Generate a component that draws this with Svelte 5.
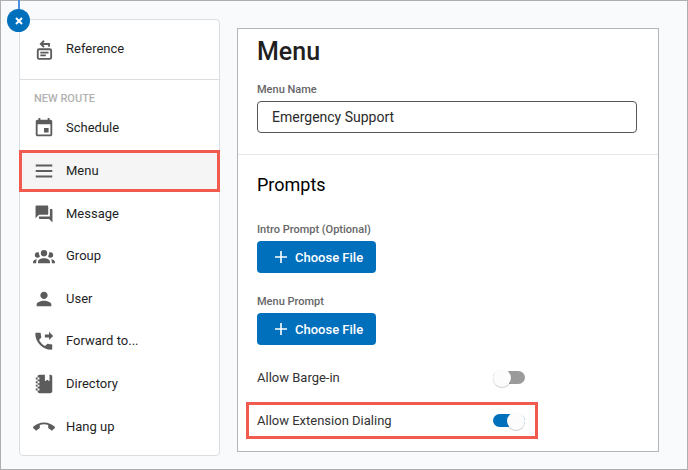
<script>
  const icons = {
    schedule:
      'M17 12h-5v5h5v-5zM16 1v2H8V1H6v2H5c-1.11 0-1.99.9-1.99 2L3 19c0 1.1.89 2 2 2h14c1.1 0 2-.9 2-2V5c0-1.1-.9-2-2-2h-1V1h-2zm3 18H5V8h14v11z',
    menu: 'M3 19h18v-2H3v2zm0-6h18v-2H3v2zm0-8v2h18V5H3z',
    message:
      'M21 6h-2v9H6v2c0 .55.45 1 1 1h11l4 4V7c0-.55-.45-1-1-1zm-4 6V3c0-.55-.45-1-1-1H3c-.55 0-1 .45-1 1v14l4-4h10c.55 0 1-.45 1-1z',
    group:
      'M12 5.5a3.5 3.5 0 1 1 0 7 3.5 3.5 0 0 1 0-7M5 8c.56 0 1.08.15 1.53.42-.15 1.43.27 2.85 1.13 3.96C7.16 13.34 6.16 14 5 14a3 3 0 0 1 0-6m14 0a3 3 0 0 1 0 6c-1.16 0-2.16-.66-2.66-1.62.86-1.11 1.28-2.53 1.13-3.96C17.92 8.15 18.44 8 19 8M5.5 18.25c0-2.07 2.91-3.75 6.5-3.75s6.5 1.68 6.5 3.75V20h-13v-1.75M0 20v-1.5c0-1.39 1.89-2.56 4.45-2.9-.59.68-.95 1.62-.95 2.65V20H0m24 0h-3.5v-1.75c0-1.03-.36-1.97-.95-2.65 2.56.34 4.45 1.51 4.45 2.9V20z',
    user: 'M12 12c2.21 0 4-1.79 4-4s-1.79-4-4-4-4 1.79-4 4 1.79 4 4 4zm0 2c-2.67 0-8 1.34-8 4v2h16v-2c0-2.66-5.33-4-8-4z',
    forward:
      'M17.500 11l4.500-4.500L17.500 2v2.800H13v3.400h4.500zM20 15.500c-1.250 0-2.450-.2-3.570-.57-.35-.11-.74-.03-1.020.24l-2.200 2.200c-2.830-1.440-5.150-3.750-6.590-6.590l2.200-2.210c.28-.26.36-.65.25-1C8.700 6.450 8.500 5.250 8.500 4c0-.55-.45-1-1-1H3.500c-.55 0-1 .45-1 1 0 9.390 8.110 17.500 17.500 17.500.55 0 1-.45 1-1v-4c0-.55-.45-1-1-1z',
    directory:
      'M3 7V5h2V4c0-1.100.9-2 2-2h6v7l2.500-1.700L18 9V2h1c1.100 0 2 .9 2 2v16c0 1.100-.9 2-2 2H7c-1.100 0-2-.9-2-2v-1H3v-2h2v-2.300H3v-2h2v-1.600H3v-2h2V7H3m4 4.100v-2H5v2h2m0 3.600v-2H5v2h2M7 7V5H5v2h2m0 12v-2H5v2h2z',
    hangup:
      'M12 9c-1.600 0-3.150.25-4.600.72v3.100c0 .39-.23.74-.56.9-.98.49-1.870 1.120-2.660 1.850-.18.18-.43.28-.7.28-.28 0-.53-.11-.71-.29L.29 13.080c-.18-.17-.29-.42-.29-.7 0-.28.11-.53.29-.71C3.340 8.780 7.460 7 12 7s8.660 1.780 11.710 4.670c.18.18.29.43.29.71 0 .28-.11.53-.29.71l-2.480 2.480c-.18.18-.43.29-.71.29-.27 0-.52-.11-.7-.28-.79-.74-1.690-1.360-2.670-1.850-.33-.16-.56-.5-.56-.9v-3.100C15.150 9.250 13.600 9 12 9z'
  };

  const routes = [
    { id: 'schedule', label: 'Schedule' },
    { id: 'menu', label: 'Menu' },
    { id: 'message', label: 'Message', viewBox: '-1 -1 26 26' },
    { id: 'group', label: 'Group' },
    { id: 'user', label: 'User' },
    { id: 'forward', label: 'Forward to...' },
    { id: 'directory', label: 'Directory' },
    { id: 'hangup', label: 'Hang up' }
  ];

  const prompts = [
    { id: 'intro-prompt', label: 'Intro Prompt (Optional)' },
    { id: 'menu-prompt', label: 'Menu Prompt' }
  ];

  let selected = 'menu';
  let menuName = 'Emergency Support';
  let bargeIn = false;
  let extensionDialing = true;
</script>

<div class="page">
  <span class="connector"></span>
  <button class="close" type="button" aria-label="Close">
    <svg viewBox="0 0 8 8" width="8" height="8" aria-hidden="true">
      <path d="M1 1l6 6m0-6l-6 6" stroke="currentColor" stroke-width="2" />
    </svg>
  </button>

  <nav class="sidebar">
    <div class="reference">
      <button class="route" type="button">
        <svg class="icon outline" viewBox="0 0 24 24" aria-hidden="true">
          <rect x="5.200" y="12.300" width="14.600" height="10.400" rx="1.500" />
          <path d="M8 16h9M8 19h6M17.500 9.500V6.500H9M12 3L8.500 6.500 12 10" />
        </svg>
        Reference
      </button>
    </div>
    <h2 class="group-label">NEW ROUTE</h2>
    <ul class="routes">
      {#each routes as route}
        <li>
          <button
            class="route"
            class:selected={selected === route.id}
            type="button"
            on:click={() => (selected = route.id)}
          >
            <svg class="icon" viewBox={route.viewBox ?? '0 0 24 24'} aria-hidden="true">
              <path d={icons[route.id]} />
            </svg>
            {route.label}
          </button>
        </li>
      {/each}
    </ul>
  </nav>

  <main class="panel">
    <section class="header">
      <h1>Menu</h1>
      <label class="field-label" for="menu-name">Menu Name</label>
      <input id="menu-name" class="text-input" type="text" bind:value={menuName} />
    </section>

    <section class="prompts">
      <h2>Prompts</h2>
      {#each prompts as prompt}
        <div class="field">
          <label class="field-label" for={prompt.id}>{prompt.label}</label>
          <button id={prompt.id} class="choose" type="button">
            <svg viewBox="0 0 12 12" width="12" height="12" aria-hidden="true">
              <path d="M6 0v12M0 6h12" stroke="currentColor" stroke-width="1.600" />
            </svg>
            Choose File
          </button>
        </div>
      {/each}

      <div class="toggles">
        <div class="toggle-row">
          <label for="barge-in">Allow Barge-in</label>
          <input id="barge-in" class="toggle" type="checkbox" bind:checked={bargeIn} />
        </div>
        <div class="toggle-row highlighted">
          <label for="extension-dialing">Allow Extension Dialing</label>
          <input
            id="extension-dialing"
            class="toggle"
            type="checkbox"
            bind:checked={extensionDialing}
          />
        </div>
      </div>
    </section>
  </main>
</div>

<style>
  :global(body) {
    margin: 0;
    font-family: Roboto, 'Liberation Sans', sans-serif;
  }

  .page,
  .page * {
    box-sizing: border-box;
  }

  .page {
    position: relative;
    display: flex;
    gap: 17px;
    min-height: 100vh;
    padding: 18px 28px 13px 18px;
    border: 1px solid #aeaeb0;
    background: #f8fafc;
    color: #1f1f1f;
  }

  h1,
  h2 {
    margin: 0;
  }

  button,
  input {
    font-family: inherit;
  }

  button {
    cursor: pointer;
  }

  .connector {
    position: absolute;
    top: -1px;
    left: 17px;
    width: 2px;
    height: 12px;
    background: #4a90e2;
  }

  .close {
    position: absolute;
    top: 8px;
    left: 6px;
    display: flex;
    align-items: center;
    justify-content: center;
    width: 23px;
    height: 23px;
    padding: 0;
    border: 0;
    border-radius: 50%;
    background: #0070bd;
    color: #fff;
  }

  .sidebar {
    display: flex;
    flex-direction: column;
    flex: none;
    width: 201px;
    padding-bottom: 7px;
    border: 1px solid #dcdddf;
    border-radius: 4px;
    background: #fff;
  }

  .reference {
    padding: 8px 0 9px;
    border-bottom: 1px solid #dcdddf;
  }

  .group-label {
    padding: 11px 14px 0;
    font-size: 11px;
    font-weight: 500;
    line-height: 16px;
    color: #b2b2b2;
  }

  .routes {
    display: grid;
    flex: 1;
    grid-auto-rows: 1fr;
    margin: 0 -1px;
    padding: 0;
    list-style: none;
  }

  .routes .route {
    height: 100%;
    padding: 0 11px;
  }

  .route {
    display: flex;
    align-items: center;
    gap: 11px;
    width: 100%;
    min-height: 42px;
    padding: 0 10px;
    border: 3px solid transparent;
    background: none;
    font-size: 13px;
    line-height: 18px;
    color: #1f1f1f;
    text-align: left;
  }

  .route.selected {
    border-color: #f05a4f;
    background: #f5f5f5;
  }

  .icon {
    flex: none;
    width: 22px;
    height: 22px;
    fill: #5c5c5c;
  }

  .icon.outline {
    fill: none;
    stroke: #5c5c5c;
    stroke-width: 2;
  }

  .panel {
    flex: 1;
    align-self: flex-start;
    min-width: 0;
    margin-top: 9px;
    border: 1px solid #b2b4b6;
    background: #fff;
  }

  .header {
    display: flex;
    flex-direction: column;
    padding: 9px 21px 21px 19px;
    border-bottom: 1px solid #e6e6e6;
  }

  h1 {
    margin-bottom: 16px;
    font-size: 25px;
    font-weight: 500;
    line-height: 28px;
  }

  .field-label {
    font-size: 11px;
    font-weight: 500;
    line-height: 16px;
    color: #666;
  }

  .text-input {
    width: 100%;
    height: 32px;
    margin-top: 3px;
    padding: 0 14px;
    border: 1px solid #555;
    border-radius: 4px;
    background: #fff;
    font-size: 14px;
    color: #2a2a2a;
  }

  .prompts {
    padding: 18px 19px 12px;
  }

  .prompts h2 {
    margin-bottom: 25px;
    font-size: 18px;
    font-weight: 400;
    line-height: 24px;
    color: #000;
  }

  .field {
    display: flex;
    flex-direction: column;
    align-items: flex-start;
    gap: 3px;
  }

  .field + .field {
    margin-top: 21px;
  }

  .choose {
    display: flex;
    align-items: center;
    gap: 8px;
    height: 32px;
    padding: 0 13px 0 18px;
    border: 0;
    border-radius: 4px;
    background: #0070bd;
    font-size: 13px;
    font-weight: 500;
    color: #fff;
  }

  .toggles {
    display: flex;
    flex-direction: column;
    gap: 6px;
    margin-top: 14px;
  }

  .toggle-row {
    display: flex;
    align-items: center;
    justify-content: space-between;
    max-width: 292px;
    min-height: 37px;
    margin-left: -11px;
    padding: 0 10px 0 8px;
    border: 3px solid transparent;
    font-size: 13px;
    line-height: 18px;
    color: #333;
  }

  .toggle-row.highlighted {
    border-color: #f05a4f;
  }

  .toggle {
    display: flex;
    align-items: center;
    flex: none;
    width: 32px;
    height: 13px;
    margin: 0;
    appearance: none;
    border-radius: 7px;
    background: #9b9b9b;
    cursor: pointer;
  }

  .toggle::before {
    content: '';
    width: 18px;
    height: 18px;
    flex: none;
    border-radius: 50%;
    background: #fcfcfc;
    box-shadow: 0 1px 1px rgba(0, 0, 0, 0.2);
  }

  .toggle:checked {
    justify-content: flex-end;
    background: #0070bd;
  }
</style>
